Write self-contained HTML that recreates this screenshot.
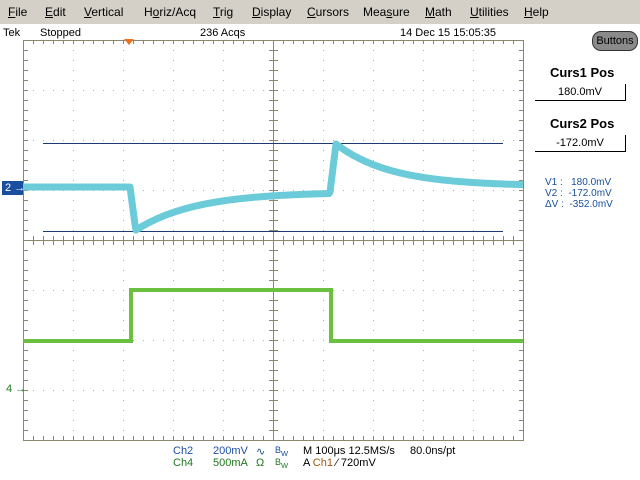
<!DOCTYPE html>
<html><head><meta charset="utf-8"><style>
body{margin:0;width:640px;height:480px;overflow:hidden;background:#fff;font-family:"Liberation Sans",sans-serif;position:relative}
.menu{position:absolute;left:0;top:0;width:640px;height:24px;background:#d4d0c8;font-size:12px}
.menu span{position:absolute;top:5px;color:#000}
.t{position:absolute;font-size:11px;white-space:nowrap}
.box{position:absolute;left:535px;width:90px;height:16px;border-bottom:1px solid #000;border-right:1px solid #000;text-align:center;font-size:11px;line-height:16px}
</style></head><body>
<div class="menu">
<span style="left:8px"><u>F</u>ile</span>
<span style="left:45px"><u>E</u>dit</span>
<span style="left:84px"><u>V</u>ertical</span>
<span style="left:144px">H<u>o</u>riz/Acq</span>
<span style="left:213px"><u>T</u>rig</span>
<span style="left:252px"><u>D</u>isplay</span>
<span style="left:307px"><u>C</u>ursors</span>
<span style="left:363px">Mea<u>s</u>ure</span>
<span style="left:425px"><u>M</u>ath</span>
<span style="left:470px"><u>U</u>tilities</span>
<span style="left:524px"><u>H</u>elp</span>
</div>
<div class="t" style="left:3px;top:27px">Tek</div>
<div class="t" style="left:40px;top:27px">Stopped</div>
<div class="t" style="left:200px;top:27px">236 Acqs</div>
<div class="t" style="left:400px;top:27px">14 Dec 15 15:05:35</div>
<div style="position:absolute;left:592px;top:31px;width:44px;height:18px;border-radius:9px;background:#8a8a8a;border:1px solid #333;font-size:11px;text-align:center;line-height:18px">Buttons</div>
<div class="t" style="left:550px;top:65px;font-weight:bold;font-size:13px">Curs1 Pos</div>
<div class="box" style="top:84px">180.0mV</div>
<div class="t" style="left:550px;top:116px;font-weight:bold;font-size:13px">Curs2 Pos</div>
<div class="box" style="top:135px">-172.0mV</div>
<div class="t" style="left:545px;top:177px;color:#1a4fa0;font-size:10px;line-height:11px">V1 :&nbsp;&nbsp;&nbsp;180.0mV<br>V2 :&nbsp;&nbsp;-172.0mV<br>ΔV :&nbsp;&nbsp;-352.0mV</div>
<svg id="s" width="640" height="480" style="position:absolute;left:0;top:0"></svg>
<div style="position:absolute;left:2px;top:181px;width:21px;height:14px;background:#1a4fa0;color:#fff;font-size:11px;line-height:14px;white-space:nowrap;overflow:hidden">&nbsp;2 →</div>
<div class="t" style="left:6px;top:383px;color:#1e7a1e">4 →</div>
<div class="t" style="left:173px;top:445px;color:#1a4fa0">Ch2</div>
<div class="t" style="left:213px;top:445px;color:#1a4fa0">200mV</div>
<div class="t" style="left:256px;top:445px;color:#1a4fa0">∿</div>
<div class="t" style="left:275px;top:445px;color:#1a4fa0;font-size:9px">B<sub>W</sub></div>
<div class="t" style="left:303px;top:445px">M 100μs 12.5MS/s</div>
<div class="t" style="left:410px;top:445px">80.0ns/pt</div>
<div class="t" style="left:173px;top:457px;color:#1e7a1e">Ch4</div>
<div class="t" style="left:213px;top:457px;color:#1e7a1e">500mA</div>
<div class="t" style="left:256px;top:457px;color:#1e7a1e">Ω</div>
<div class="t" style="left:275px;top:457px;color:#1e7a1e;font-size:9px">B<sub>W</sub></div>
<div class="t" style="left:303px;top:457px">A <span style="color:#a05a10">Ch1</span> ⁄ 720mV</div>
<script>
var s=document.getElementById('s'),h='';
var G='#8c8870';
h+='<rect x="23.5" y="40.5" width="500" height="400" fill="none" stroke="'+G+'"/>';
for(var i=1;i<10;i++){var x=23.5+50*i;h+='<line x1="'+x+'" y1="40" x2="'+x+'" y2="440" stroke="'+(i==5?G:'#b0b0a0')+'" stroke-dasharray="'+(i==5?'':'1,9')+'"/>';}
for(var j=1;j<8;j++){var y=40.5+50*j;h+='<line x1="23" y1="'+y+'" x2="523" y2="'+y+'" stroke="'+(j==4?G:'#b0b0a0')+'" stroke-dasharray="'+(j==4?'':'1,9')+'"/>';}
for(var x=23.5;x<=523;x+=10){h+='<line x1="'+x+'" y1="236" x2="'+x+'" y2="245" stroke="'+G+'"/><line x1="'+x+'" y1="40" x2="'+x+'" y2="44" stroke="'+G+'"/><line x1="'+x+'" y1="436" x2="'+x+'" y2="440" stroke="'+G+'"/>';}
for(var y=40.5;y<=440;y+=10){h+='<line x1="269" y1="'+y+'" x2="278" y2="'+y+'" stroke="'+G+'"/><line x1="23" y1="'+y+'" x2="28" y2="'+y+'" stroke="'+G+'"/><line x1="519" y1="'+y+'" x2="523" y2="'+y+'" stroke="'+G+'"/>';}
h+='<polygon points="124,39 134,39 129,45" fill="#f07020"/>';
h+='<line x1="43" y1="143.5" x2="503" y2="143.5" stroke="#1a3a70"/><line x1="43" y1="231.5" x2="503" y2="231.5" stroke="#1a3a70"/>';
var p=[];
for(var x=23;x<=523;x++){var y;
if(x<130)y=187;else if(x<136)y=187+(x-130)*7.5;
else if(x<330)y=192+(230-192)*Math.exp(-(x-136)/60);
else if(x<336)y=192-(x-330)*8;
else y=186-(186-144)*Math.exp(-(x-336)/55);
p.push(x+','+y.toFixed(1));}
h+='<polyline points="'+p.join(' ')+'" fill="none" stroke="#6ccbd9" stroke-width="7" stroke-linejoin="round"/>';
p=[];
for(var x=23;x<=523;x++){var y=(x>=131&&x<331)?290:341;if(x==131||x==331)p.push(x+','+(x==131?341:290));p.push(x+','+y);}
h+='<polyline points="'+p.join(' ')+'" fill="none" stroke="#6cc040" stroke-width="4"/>';
s.innerHTML=h;
</script>
</body></html>
